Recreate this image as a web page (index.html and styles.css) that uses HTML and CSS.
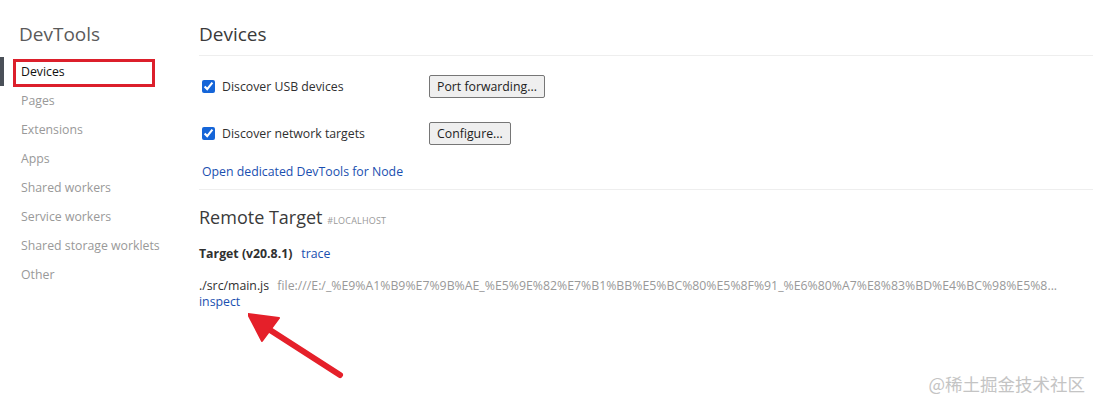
FILE: index.html
```html
<!DOCTYPE html>
<html>

<head>
    <meta http-equiv="Content-Type" content="text/html; charset=utf-8" />
    <title>Inspect with Chrome Developer Tools</title>
    <link rel="stylesheet" href="styles.css">
</head>

<body>

    <div class="page">
        <div class="Side-Bar">
            <h1 class="Side-Title">DevTools</h1>
            <ul class="Nav-List">
                <li class="Nav-Item selected">Devices</li>
                <li class="Nav-Item">Pages</li>
                <li class="Nav-Item">Extensions</li>
                <li class="Nav-Item">Apps</li>
                <li class="Nav-Item">Shared workers</li>
                <li class="Nav-Item">Service workers</li>
                <li class="Nav-Item">Shared storage worklets</li>
                <li class="Nav-Item">Other</li>
            </ul>
            <!-- annotation box round the selected item -->
            <div class="Mark-Box"></div>
        </div>

        <div class="Content">
            <h2 class="Content-Title">Devices</h2>

            <div class="Device-Settings">
                <div class="Setting-Row">
                    <label class="Check-Label">
                        <input type="checkbox" checked>
                        <span>Discover USB devices</span>
                    </label>
                    <button class="Plain-Button">Port forwarding...</button>
                </div>
                <div class="Setting-Row">
                    <label class="Check-Label">
                        <input type="checkbox" checked>
                        <span>Discover network targets</span>
                    </label>
                    <button class="Plain-Button">Configure...</button>
                </div>
                <a class="Node-Link" href="#">Open dedicated DevTools for Node</a>
            </div>

            <div class="Remote-Section">
                <h3 class="Remote-Title">Remote Target <span class="Remote-Host">#LOCALHOST</span></h3>

                <div class="Target-Head">
                    <span class="Target-Name">Target (v20.8.1)</span>
                    <a class="Action-Link" href="#">trace</a>
                </div>

                <div class="Target-Row">
                    <div class="Target-Line">
                        <span class="Target-File">./src/main.js</span>
                        <span class="Target-Url">file:///E:/_%E9%A1%B9%E7%9B%AE_%E5%9E%82%E7%B1%BB%E5%BC%80%E5%8F%91_%E6%80%A7%E8%83%BD%E4%BC%98%E5%8...</span>
                    </div>
                    <a class="Action-Link" href="#">inspect</a>
                </div>
            </div>
        </div>
    </div>

    <!-- annotation arrow pointing at "inspect" -->
    <svg class="Mark-Arrow" width="110" height="80" viewBox="0 0 110 80">
        <path d="M92 64 L22 19" stroke="#e5202a" stroke-width="6" stroke-linecap="round" fill="none" />
        <path d="M0 3 L31 7 L14 30 Z" fill="#e5202a" stroke="#e5202a" stroke-width="2" stroke-linejoin="round" />
    </svg>

    <div class="Watermark">@稀土掘金技术社区</div>

</body>

</html>
```

FILE: styles.css
```css
body {
    margin: 0;
    background-color: #ffffff;
    color: #303942;
    font-family: "Open Sans", "Noto Sans", sans-serif;
    font-size: 12.3px;
}

.page {
    display: flex;
    min-height: 411px;
}

/* Left navigation */
.Side-Bar {
    position: relative;
    width: 179px;
    flex-shrink: 0;
}

.Side-Title {
    margin: 0;
    padding: 21px 0 0 19px;
    height: 35px;
    box-sizing: border-box;
    font-size: 19px;
    font-weight: 400;
    color: #5a5a5a;
    line-height: 26px;
}

.Nav-List {
    list-style: none;
    margin: 0;
    padding: 0;
    margin-top: 22px;
}

.Nav-Item {
    height: 29px;
    line-height: 29px;
    padding-left: 17px;
    color: #999999;
    border-left: 4px solid transparent;
    box-sizing: border-box;
}

.Nav-Item.selected {
    color: #111111;
    border-left-color: #4a5058;
}

.Mark-Box {
    position: absolute;
    left: 13px;
    top: 59px;
    width: 142px;
    height: 28px;
    border: 3px solid #dc1f2b;
    box-sizing: border-box;
}

/* Main column */
.Content {
    flex: 1;
    min-width: 0;
    padding-left: 20px;
}

.Content-Title {
    margin: 0;
    height: 56px;
    padding-top: 21px;
    box-sizing: border-box;
    font-size: 19px;
    font-weight: 400;
    color: #3a3a3a;
    line-height: 26px;
    border-bottom: 1px solid #eeeeee;
}

.Device-Settings {
    padding: 18px 0 0 3px;
    height: 134px;
    box-sizing: border-box;
    border-bottom: 1px solid #eeeeee;
}

.Setting-Row {
    display: flex;
    align-items: center;
    height: 24px;
    margin-bottom: 23px;
}

.Check-Label {
    display: flex;
    align-items: center;
    width: 227px;
    color: #303030;
}

.Check-Label input {
    margin: 0 7px 0 0;
    width: 13px;
    height: 13px;
    accent-color: #1565d8;
}

.Plain-Button {
    font-family: inherit;
    font-size: 12.3px;
    color: #222222;
    background-color: #efefef;
    border: 1px solid #767676;
    border-radius: 2px;
    height: 23px;
    padding: 0 7px;
}

.Node-Link {
    display: block;
    margin-top: -5px;
    color: #1a4fb0;
    text-decoration: none;
}

.Remote-Section {
    padding-right: 27px;
}

.Remote-Title {
    margin: 0;
    padding-top: 15px;
    height: 52px;
    box-sizing: border-box;
    font-size: 18px;
    font-weight: 400;
    color: #3a3a3a;
    line-height: 24px;
}

.Remote-Host {
    font-size: 9px;
    color: #999999;
    letter-spacing: 0.2px;
}

.Target-Head {
    display: flex;
    align-items: center;
    gap: 9px;
    height: 22px;
}

.Target-Name {
    font-weight: 700;
    color: #303030;
}

.Action-Link {
    color: #1a4fb0;
    text-decoration: none;
}

.Target-Row {
    padding-top: 14px;
    line-height: 16px;
}

.Target-Line {
    white-space: nowrap;
}

.Target-File {
    color: #303030;
    margin-right: 5px;
}

.Target-Url {
    color: #999999;
}

/* Annotations laid over the page */
.Mark-Arrow {
    position: absolute;
    left: 248px;
    top: 311px;
}

.Watermark {
    position: absolute;
    right: 8px;
    bottom: 15px;
    font-family: "Noto Sans CJK SC", sans-serif;
    font-size: 17.5px;
    color: #c4c4c4;
}
```
